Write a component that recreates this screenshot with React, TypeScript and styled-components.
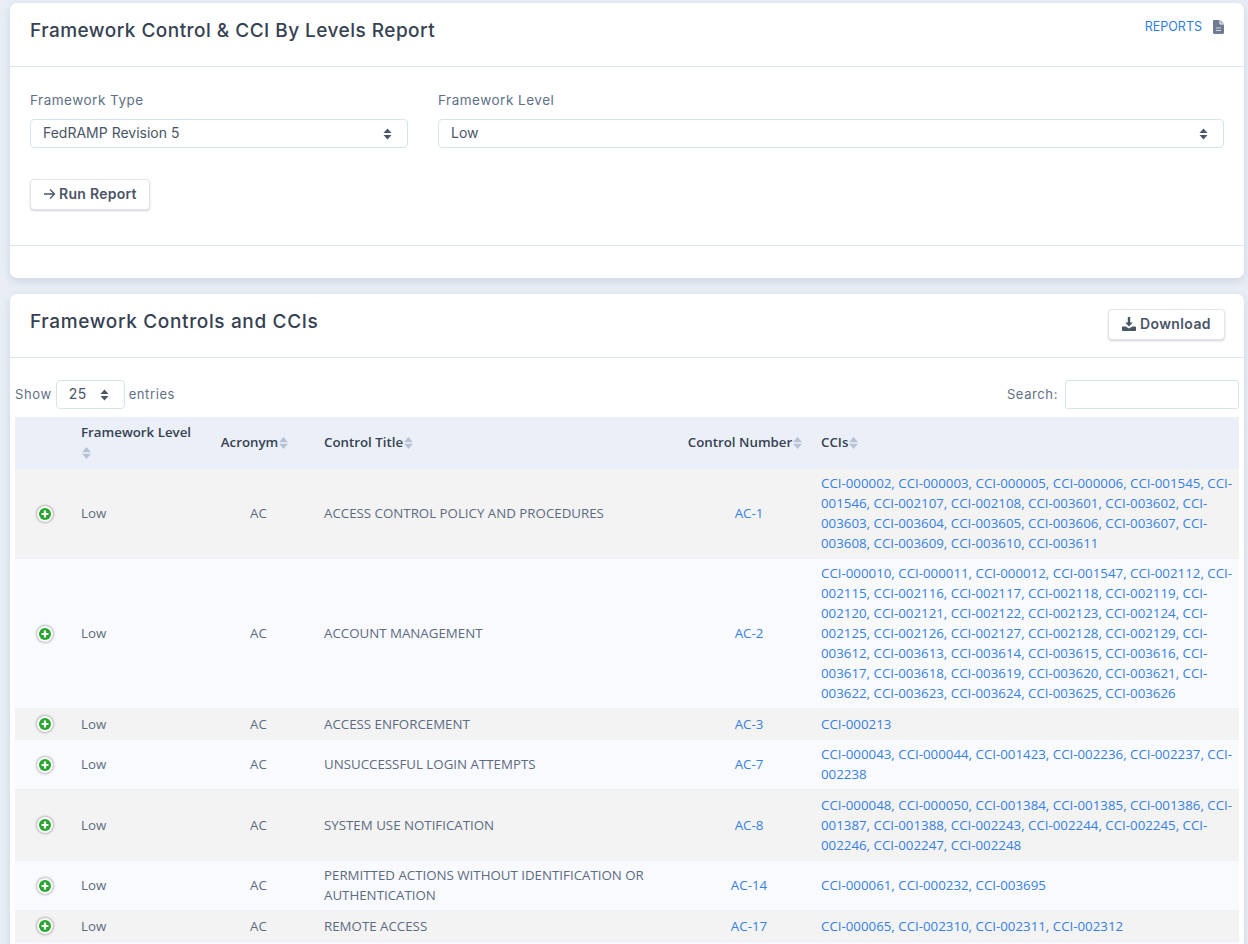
import React from "react";
import styled, { createGlobalStyle } from "styled-components";

type Row = {
  title: string;
  number: string;
  ccis: string;
  height: number;
};

const rows: Row[] = [
  {
    title: "ACCESS CONTROL POLICY AND PROCEDURES",
    number: "AC-1",
    height: 90,
    ccis: "CCI-000002, CCI-000003, CCI-000005, CCI-000006, CCI-001545, CCI-001546, CCI-002107, CCI-002108, CCI-003601, CCI-003602, CCI-003603, CCI-003604, CCI-003605, CCI-003606, CCI-003607, CCI-003608, CCI-003609, CCI-003610, CCI-003611",
  },
  {
    title: "ACCOUNT MANAGEMENT",
    number: "AC-2",
    height: 150,
    ccis: "CCI-000010, CCI-000011, CCI-000012, CCI-001547, CCI-002112, CCI-002115, CCI-002116, CCI-002117, CCI-002118, CCI-002119, CCI-002120, CCI-002121, CCI-002122, CCI-002123, CCI-002124, CCI-002125, CCI-002126, CCI-002127, CCI-002128, CCI-002129, CCI-003612, CCI-003613, CCI-003614, CCI-003615, CCI-003616, CCI-003617, CCI-003618, CCI-003619, CCI-003620, CCI-003621, CCI-003622, CCI-003623, CCI-003624, CCI-003625, CCI-003626",
  },
  { title: "ACCESS ENFORCEMENT", number: "AC-3", height: 31, ccis: "CCI-000213" },
  {
    title: "UNSUCCESSFUL LOGIN ATTEMPTS",
    number: "AC-7",
    height: 50,
    ccis: "CCI-000043, CCI-000044, CCI-001423, CCI-002236, CCI-002237, CCI-002238",
  },
  {
    title: "SYSTEM USE NOTIFICATION",
    number: "AC-8",
    height: 71,
    ccis: "CCI-000048, CCI-000050, CCI-001384, CCI-001385, CCI-001386, CCI-001387, CCI-001388, CCI-002243, CCI-002244, CCI-002245, CCI-002246, CCI-002247, CCI-002248",
  },
  {
    title: "PERMITTED ACTIONS WITHOUT IDENTIFICATION OR AUTHENTICATION",
    number: "AC-14",
    height: 50,
    ccis: "CCI-000061, CCI-000232, CCI-003695",
  },
  {
    title: "REMOTE ACCESS",
    number: "AC-17",
    height: 31,
    ccis: "CCI-000065, CCI-002310, CCI-002311, CCI-002312",
  },
];

const GlobalStyle = createGlobalStyle`
  html, body {
    margin: 0;
    height: 944px;
    overflow: hidden;
    background: #e9eef6;
  }
  * {
    box-sizing: border-box;
  }
`;

const Page = styled.div`
  padding: 3px 4px 0 10px;
  display: flex;
  flex-direction: column;
  gap: 16px;
  font-family: Inter, "Liberation Sans", sans-serif;
  color: #5a6a80;
`;

const Card = styled.section`
  background: #fff;
  border-radius: 7px;
  box-shadow: 0 3px 10px rgba(60, 80, 110, 0.16);
`;

const CardHeader = styled.header`
  height: 64px;
  padding: 0 19px 0 20px;
  border-bottom: 1px solid #dde5f0;
  display: flex;
  justify-content: space-between;
  align-items: flex-start;
`;

const CardTitle = styled.h2`
  margin: 15px 0 0;
  font-size: 19px;
  line-height: 26px;
  font-weight: 500;
  letter-spacing: 0.47px;
  color: #364152;
`;

const SectionTitle = styled(CardTitle)`
  letter-spacing: 0.65px;
`;

const ReportsLink = styled.a`
  margin: 14px 1px 0 0;
  display: flex;
  align-items: center;
  gap: 11px;
  font-size: 12.5px;
  line-height: 20px;
  color: #2f7de1;
`;

const FilterForm = styled.div`
  height: 179px;
  padding: 23px 20px 0;
  border-bottom: 1px solid #dde5f0;
`;

const Fields = styled.div`
  display: flex;
  gap: 30px;
`;

const Field = styled.label<{ $width?: number }>`
  display: block;
  flex: ${(p) => (p.$width ? `0 0 ${p.$width}px` : "1")};
`;

const FieldLabel = styled.div`
  font-size: 13.5px;
  line-height: 20px;
  letter-spacing: 0.5px;
  color: #5f6f86;
  margin-bottom: 9px;
`;

const SelectBox = styled.div`
  height: 29px;
  border: 1px solid #d9e2ef;
  border-radius: 4px;
  background: #fff;
  padding: 0 15px 2px 12px;
  display: flex;
  align-items: center;
  justify-content: space-between;
  font-size: 14px;
  color: #4a5568;

  svg {
    margin-top: 2px;
  }
`;

const Button = styled.button`
  height: 31px;
  padding: 0 12px 2px;
  border: 1px solid #e2e6ec;
  border-radius: 4px;
  background: #fff;
  box-shadow: 0 1px 2px rgba(40, 50, 70, 0.22);
  display: inline-flex;
  align-items: center;
  gap: 3px;
  font-family: Inter, "Liberation Sans", sans-serif;
  font-size: 14px;
  font-weight: 600;
  letter-spacing: 0.28px;
  color: #4a5568;
`;

const RunButton = styled(Button)`
  margin-top: 31px;
`;

const DownloadButton = styled(Button)`
  margin-top: 15px;
  padding: 0 13px 2px;
  letter-spacing: 0.4px;
  gap: 4px;
`;

const CardFooter = styled.div`
  height: 32px;
`;

const TableArea = styled.div`
  padding: 22px 5px 0;
`;

const TableTools = styled.div`
  display: flex;
  justify-content: space-between;
  align-items: center;
  height: 29px;
  margin-bottom: 8px;
  font-size: 13px;
  letter-spacing: 0.6px;
  color: #5f6f86;
`;

const ToolGroup = styled.div`
  display: flex;
  align-items: center;
  gap: 4px;
`;

const ToolText = styled.span`
  margin-bottom: 2px;
`;

const PageSize = styled(SelectBox)`
  width: 69px;
`;

const SearchInput = styled.input`
  width: 174px;
  height: 29px;
  border: 1px solid #d9e2ef;
  border-radius: 3px;
  margin-left: 3px;
  background: #fff;
`;

const DataTable = styled.table`
  width: 1224px;
  table-layout: fixed;
  border-collapse: separate;
  border-spacing: 0;
  font-family: "Open Sans", "Liberation Sans", sans-serif;
  font-size: 13.3px;
  line-height: 20px;
`;

const HeadCell = styled.th<{ $center?: boolean; $width: number }>`
  width: ${(p) => p.$width}px;
  padding: 5px ${(p) => (p.$center ? "13px" : "5px")} 7px 5px;
  background: #ebf0f8;
  text-align: ${(p) => (p.$center ? "center" : "left")};
  font-weight: 600;
  color: #364152;
`;

const BodyRow = styled.tr<{ $odd: boolean; $height: number }>`
  height: ${(p) => p.$height}px;
  background: ${(p) => (p.$odd ? "#f3f3f3" : "#f9fafe")};
`;

const Cell = styled.td<{ $center?: boolean }>`
  padding: 4px 5px 5px;
  border-bottom: 1px solid #eef1f6;
  text-align: ${(p) => (p.$center ? "center" : "left")};
  color: #5c6b82;
  vertical-align: middle;
`;

const LinkText = styled.a`
  color: #3580e4;
`;

const ExpandIcon = styled.span`
  width: 16px;
  height: 16px;
  margin: 1px 0 0 17px;
  display: block;
  border-radius: 50%;
  background: #fff;
  box-shadow: 0 0 3px rgba(0, 0, 0, 0.55);
  padding: 2px;
`;

const SortWrap = styled.svg`
  width: 9px;
  height: 14px;
  vertical-align: middle;
  margin-left: 1px;
  display: inline-block;
`;

const SortIcon = () => (
  <SortWrap viewBox="0 0 9 14">
    <path d="M4.5 1 9 6.2H0Z M4.5 13 0 7.8H9Z" fill="#b7c1d3" />
  </SortWrap>
);

const UpDown = () => (
  <svg width="9" height="12" viewBox="0 0 9 12">
    <path d="M4.5 0.5 8.5 5H0.5Z M4.5 11.5 0.5 7H8.5Z" fill="#4a5568" />
  </svg>
);

const PlusIcon = () => (
  <svg width="12" height="12" viewBox="0 0 14 14" style={{ display: "block" }}>
    <circle cx="7" cy="7" r="7" fill="#27a62c" />
    <path d="M5.7 3h2.6v2.7H11v2.6H8.3V11H5.7V8.3H3V5.7h2.7Z" fill="#fff" />
  </svg>
);

const FileIcon = () => (
  <svg width="11" height="14" viewBox="0 0 11 14">
    <path d="M0 1.2C0 .5.5 0 1.2 0H6.5v3.6c0 .5.4.9.9.9H11v8.3c0 .7-.5 1.2-1.2 1.2H1.2C.5 14 0 13.5 0 12.8Z" fill="#6f7b8f" />
    <path d="M7.4 0 11 3.6H7.4Z" fill="#9aa4b4" />
    <path d="M3 7.5h5v1H3ZM3 10h5v1H3Z" fill="#d5dae3" />
  </svg>
);

const DownloadIcon = () => (
  <svg width="14" height="14" viewBox="0 0 14 14">
    <path d="M5.8 0h2.4v5.5h2.6L7 9.6 3.2 5.5h2.6Z" fill="#4a5568" />
    <path d="M0 10.5C0 9.9.4 9.5 1 9.5h2.6L7 11.6l3.4-2.1H13c.6 0 1 .4 1 1V13c0 .6-.4 1-1 1H1c-.6 0-1-.4-1-1Z" fill="#4a5568" />
  </svg>
);

const ArrowIcon = () => (
  <svg width="13" height="12" viewBox="0 0 13 12">
    <path d="M1 6h10.5M7 1.5 11.5 6 7 10.5" fill="none" stroke="#4a5568" strokeWidth="1.3" />
  </svg>
);

export default function App() {
  return (
    <Page>
      <GlobalStyle />
      <Card>
        <CardHeader>
          <CardTitle>Framework Control &amp; CCI By Levels Report</CardTitle>
          <ReportsLink>
            REPORTS <FileIcon />
          </ReportsLink>
        </CardHeader>
        <FilterForm>
          <Fields>
            <Field $width={378}>
              <FieldLabel>Framework Type</FieldLabel>
              <SelectBox>
                FedRAMP Revision 5 <UpDown />
              </SelectBox>
            </Field>
            <Field>
              <FieldLabel>Framework Level</FieldLabel>
              <SelectBox>
                Low <UpDown />
              </SelectBox>
            </Field>
          </Fields>
          <RunButton>
            <ArrowIcon /> Run Report
          </RunButton>
        </FilterForm>
        <CardFooter />
      </Card>
      <Card>
        <CardHeader>
          <SectionTitle>Framework Controls and CCIs</SectionTitle>
          <DownloadButton>
            <DownloadIcon /> Download
          </DownloadButton>
        </CardHeader>
        <TableArea>
          <TableTools>
            <ToolGroup>
              <ToolText>Show</ToolText>
              <PageSize>
                25 <UpDown />
              </PageSize>
              <ToolText>entries</ToolText>
            </ToolGroup>
            <ToolGroup>
              <ToolText>Search:</ToolText>
              <SearchInput />
            </ToolGroup>
          </TableTools>
          <DataTable>
            <thead>
              <tr>
                <HeadCell $width={61} />
                <HeadCell $width={122}>
                  Framework Level <SortIcon />
                </HeadCell>
                <HeadCell $width={121} $center>
                  Acronym
                  <SortIcon />
                </HeadCell>
                <HeadCell $width={363}>
                  Control Title
                  <SortIcon />
                </HeadCell>
                <HeadCell $width={134} $center>
                  Control Number
                  <SortIcon />
                </HeadCell>
                <HeadCell $width={423}>
                  CCIs
                  <SortIcon />
                </HeadCell>
              </tr>
            </thead>
            <tbody>
              {rows.map((row, i) => (
                <BodyRow key={row.number} $odd={i % 2 === 0} $height={row.height}>
                  <Cell>
                    <ExpandIcon>
                      <PlusIcon />
                    </ExpandIcon>
                  </Cell>
                  <Cell>Low</Cell>
                  <Cell $center>AC</Cell>
                  <Cell>{row.title}</Cell>
                  <Cell $center>
                    <LinkText>{row.number}</LinkText>
                  </Cell>
                  <Cell>
                    <LinkText>{row.ccis}</LinkText>
                  </Cell>
                </BodyRow>
              ))}
              <BodyRow $odd={false} $height={31}>
                <Cell colSpan={6} />
              </BodyRow>
            </tbody>
          </DataTable>
        </TableArea>
      </Card>
    </Page>
  );
}
